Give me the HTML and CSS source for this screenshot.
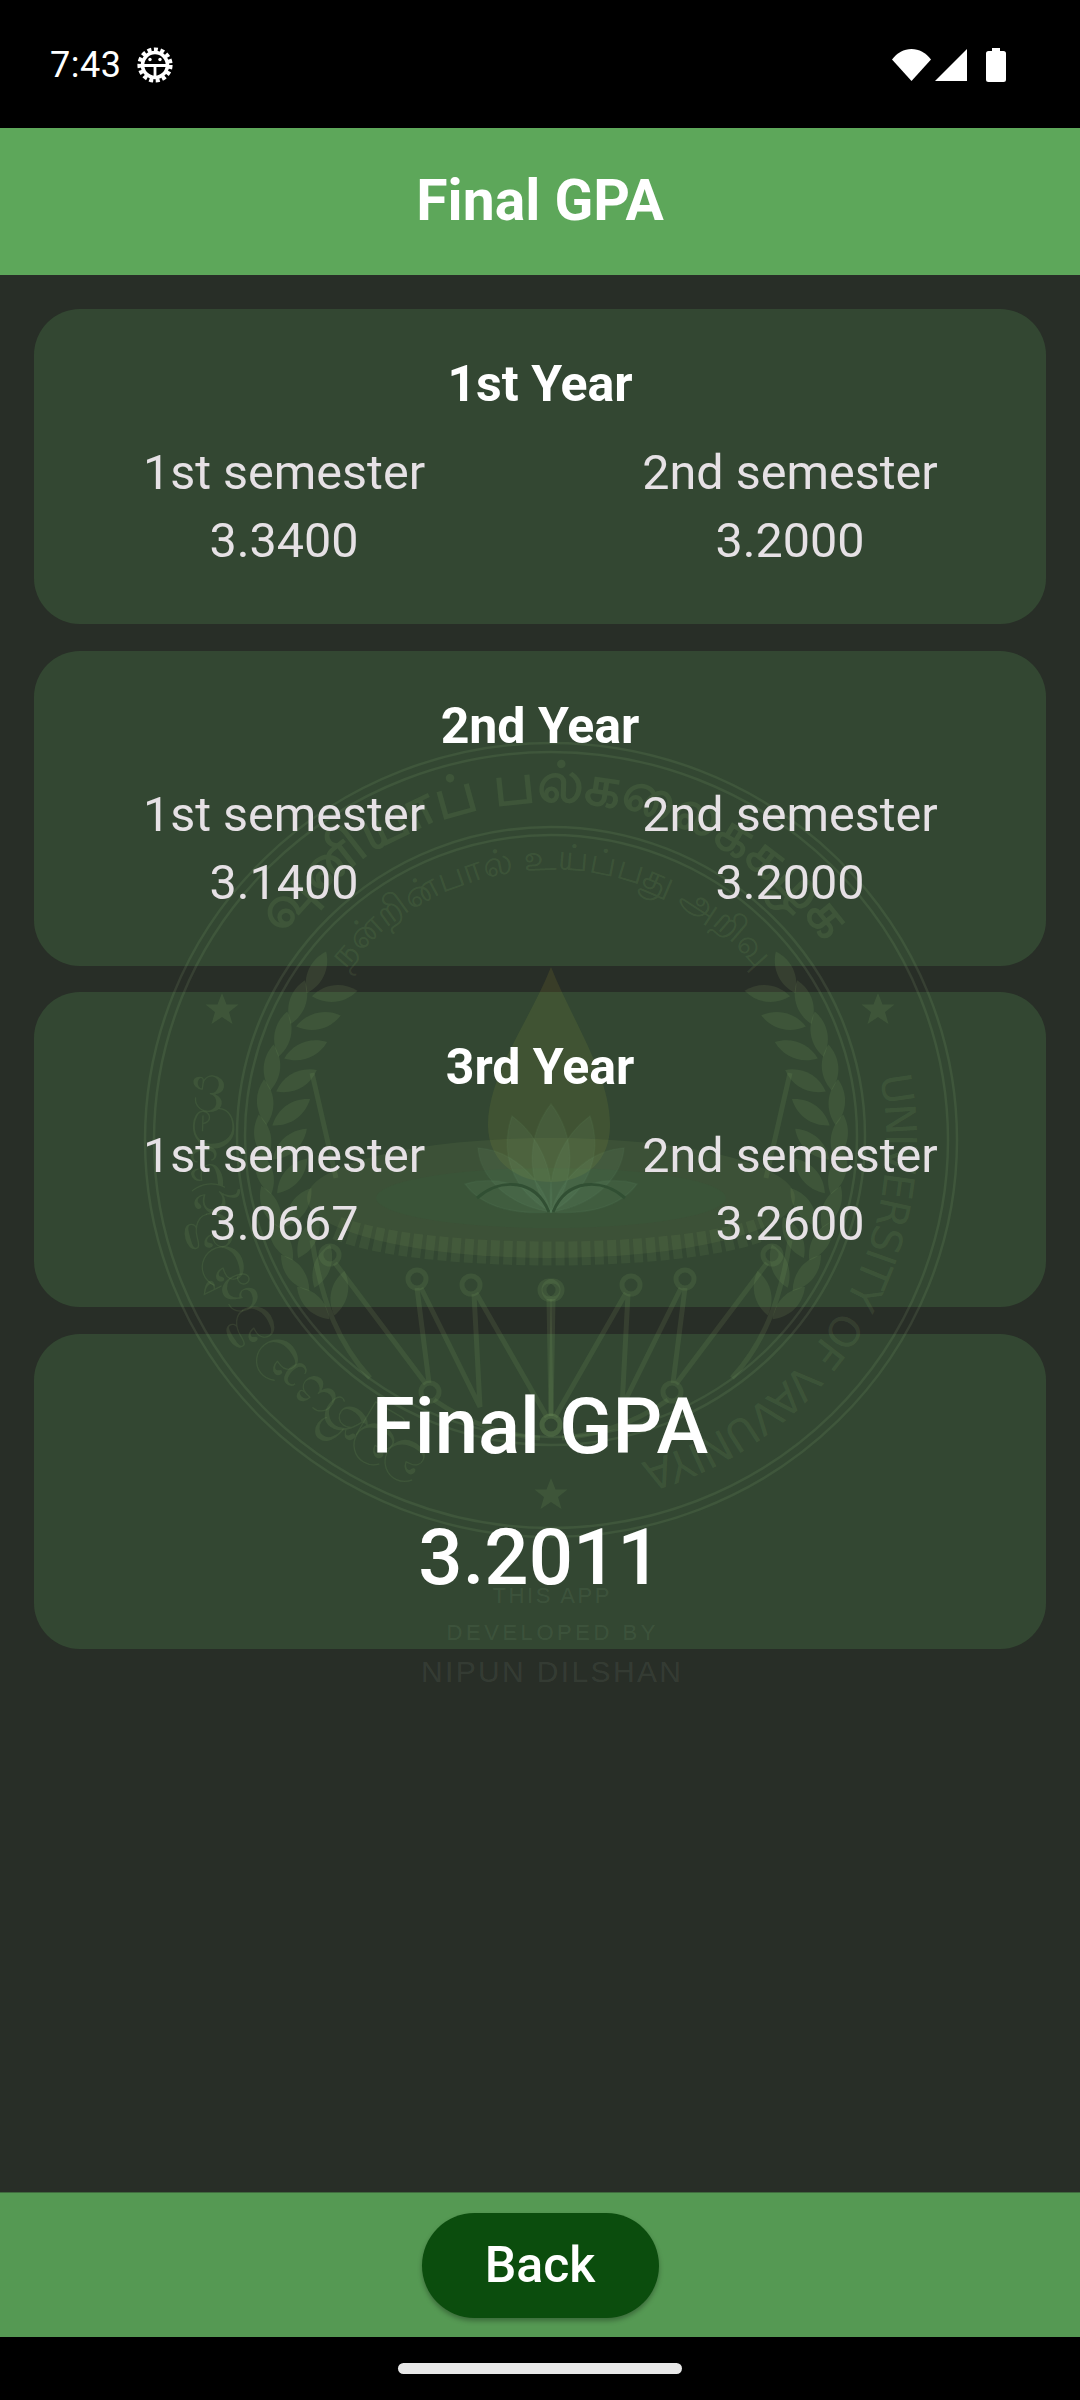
FILE: index.html
```html
<!DOCTYPE html>
<html lang="en">
<head>
    <meta charset="UTF-8">
    <meta name="viewport" content="width=device-width, initial-scale=1.0">
    <title>Final GPA</title>
    <link rel="stylesheet" href="styles.css">
</head>
<body>
    <div class="screen">
        <!-- Status bar -->
        <div class="status-bar">
            <span class="time">7:43</span>
            <svg class="gear" viewBox="0 0 36 36" width="36" height="36">
                <circle cx="18" cy="18" r="15.6" fill="none" stroke="#fff" stroke-width="4" stroke-dasharray="4 2.54"/>
                <circle cx="18" cy="18" r="12.5" fill="none" stroke="#fff" stroke-width="3.6"/>
                <circle cx="13" cy="12.5" r="1.7" fill="#fff"/>
                <circle cx="23" cy="12.5" r="1.7" fill="#fff"/>
                <path d="M6 18.5H30M18 18.5V31" stroke="#fff" stroke-width="2.8" fill="none"/>
            </svg>
            <div class="status-icons">
                <svg viewBox="0 0 39 32" width="39" height="32"><path d="M0 10.5C5 4 12 0 19.500 0S34 4 39 10.500L19.500 32Z" fill="#fff"/></svg>
                <svg viewBox="0 0 32 32" width="32" height="32"><path d="M32 0V32H0Z" fill="#fff"/></svg>
                <svg class="battery" viewBox="0 0 20 34" width="20" height="34"><path d="M6 0H14V3H17.500A2.500 2.500 0 0 1 20 5.500V31.500A2.500 2.500 0 0 1 17.500 34H2.500A2.500 2.500 0 0 1 0 31.500V5.500A2.500 2.500 0 0 1 2.500 3H6Z" fill="#fff"/></svg>
            </div>
        </div>

        <header class="app-bar">
            <h1>Final GPA</h1>
        </header>

        <main class="results">
            <!-- University crest behind the cards -->
            <svg class="crest" viewBox="0 275 1080 1917" preserveAspectRatio="xMidYMin meet">
                <defs>
                    <path id="star" d="M0 -17L4.500 -5.500H16.500L7 2L10.500 14L0 7L-10.500 14L-7 2L-16.500 -5.500H-4.500Z"/>
                    <path id="leaf" d="M0 0C-11 -14 -11 -32 0 -46C11 -32 11 -14 0 0Z"/>
                    <g id="leaf-pair">
                        <use href="#leaf" transform="translate(266 1140) rotate(-6)"/>
                        <use href="#leaf" transform="translate(272 1140) rotate(52)"/>
                    </g>
                    <path id="tamil-outer" d="M272.500 948.400A338 338 0 0 1 829.500 948.400"/>
                    <path id="tamil-inner" d="M345 970A262 262 0 0 1 757 970"/>
                    <path id="latin-arc" d="M880 1076A335 335 0 0 1 650 1460"/>
                    <path id="sinhala-arc" d="M431 1449A332 332 0 0 1 226 1077"/>
                </defs>
                <g class="crest-lines">
                    <ellipse cx="551" cy="1140" rx="406" ry="397"/>
                    <ellipse cx="551" cy="1140" rx="397" ry="388"/>
                    <ellipse cx="551" cy="1136" rx="314" ry="309"/>
                    <ellipse cx="551" cy="1136" rx="306" ry="301"/>
                </g>
                <g class="crest-fill">
                    <use href="#star" x="222" y="1010"/>
                    <use href="#star" x="878" y="1010"/>
                    <use href="#star" x="551" y="1495"/>
                    <!-- Laurel branches -->
                    <g id="laurel">
                        <use href="#leaf-pair" transform="rotate(-39 551 1140)"/>
                        <use href="#leaf-pair" transform="rotate(-32 551 1140)"/>
                        <use href="#leaf-pair" transform="rotate(-25 551 1140)"/>
                        <use href="#leaf-pair" transform="rotate(-18 551 1140)"/>
                        <use href="#leaf-pair" transform="rotate(-11 551 1140)"/>
                        <use href="#leaf-pair" transform="rotate(-4 551 1140)"/>
                        <use href="#leaf-pair" transform="rotate(3 551 1140)"/>
                        <use href="#leaf-pair" transform="rotate(10 551 1140)"/>
                        <use href="#leaf-pair" transform="rotate(17 551 1140)"/>
                        <use href="#leaf-pair" transform="rotate(24 551 1140)"/>
                        <use href="#leaf-pair" transform="rotate(31 551 1140)"/>
                    </g>
                    <use href="#laurel" transform="translate(1102 0) scale(-1 1)"/>
                    <text class="crest-latin"><textPath href="#latin-arc" textLength="500">UNIVERSITY OF VAVUNIYA</textPath></text>
                    <text class="crest-sinhala"><textPath href="#sinhala-arc" textLength="463">වවුනියාව විශ්වවිද්‍යාලය</textPath></text>
                    <text class="crest-tamil big"><textPath href="#tamil-outer" startOffset="50%">வவுனியாப் பல்கலைக்கழகம்</textPath></text>
                    <text class="crest-tamil small"><textPath href="#tamil-inner" startOffset="50%">நன்றின்பால் உய்ப்பது அறிவு</textPath></text>
                </g>
                <!-- Lamp with flame and lotus -->
                <ellipse class="lamp" cx="551" cy="1198" rx="244" ry="60"/>
                <ellipse class="lamp-well" cx="551" cy="1198" rx="175" ry="30"/>
                <path class="flame" d="M551 967C530 1020 488 1075 488 1125C488 1160 515 1182 551 1182C587 1182 610 1160 610 1125C610 1075 572 1020 551 967Z"/>
                <g class="lotus">
                    <path d="M551 1212C525 1180 527 1135 551 1104C575 1135 577 1180 551 1212Z"/>
                    <path d="M551 1212C510 1190 500 1150 512 1116C538 1135 556 1170 551 1212Z"/>
                    <path d="M551 1212C592 1190 602 1150 590 1116C564 1135 546 1170 551 1212Z"/>
                    <path d="M551 1212C505 1205 480 1175 478 1148C510 1150 540 1175 551 1212Z"/>
                    <path d="M551 1212C597 1205 622 1175 624 1148C592 1150 562 1175 551 1212Z"/>
                    <path d="M551 1212C510 1215 480 1205 465 1184C495 1175 535 1185 551 1212Z"/>
                    <path d="M551 1212C592 1215 622 1205 637 1184C607 1175 567 1185 551 1212Z"/>
                </g>
                <path class="lamp-edge" d="M477 1198C500 1178 535 1178 549 1212M625 1198C602 1178 567 1178 553 1212"/>
                <path class="lamp-band" d="M337 1228C420 1262 682 1262 765 1228"/>
                <!-- Rays under the lamp -->
                <g id="rays" class="crest-rays">
                    <circle cx="330" cy="1255" r="9"/>
                    <circle cx="417" cy="1279" r="9"/>
                    <circle cx="471" cy="1285" r="9"/>
                    <circle cx="549" cy="1290" r="9"/>
                    <circle cx="430" cy="1392" r="9"/>
                    <circle cx="551" cy="1425" r="9"/>
                    <path d="M335 1263L426 1384M417 1288L429 1383M421 1288L480 1407L474 1294M476 1293L547 1417M549 1299L551 1416"/>
                    <path d="M312 1073L336 1178M312 1240C322 1305 340 1345 370 1378M434 1400C470 1425 510 1436 540 1438"/>
                </g>
                <use href="#rays" transform="translate(1102 0) scale(-1 1)"/>
                <!-- Credit under the seal -->
                <g class="crest-credit">
                    <text x="551" y="1603" textLength="117">THIS APP</text>
                    <text x="551" y="1640" textLength="209">DEVELOPED BY</text>
                    <text class="credit-name" x="551" y="1682" textLength="260">NIPUN DILSHAN</text>
                </g>
            </svg>

            <section class="card">
                <h2>1st Year</h2>
                <div class="semesters">
                    <div class="semester"><span>1st semester</span><span>3.3400</span></div>
                    <div class="semester"><span>2nd semester</span><span>3.2000</span></div>
                </div>
            </section>
            <section class="card">
                <h2>2nd Year</h2>
                <div class="semesters">
                    <div class="semester"><span>1st semester</span><span>3.1400</span></div>
                    <div class="semester"><span>2nd semester</span><span>3.2000</span></div>
                </div>
            </section>
            <section class="card">
                <h2>3rd Year</h2>
                <div class="semesters">
                    <div class="semester"><span>1st semester</span><span>3.0667</span></div>
                    <div class="semester"><span>2nd semester</span><span>3.2600</span></div>
                </div>
            </section>
            <section class="card final">
                <p>Final GPA</p>
                <p>3.2011</p>
            </section>
        </main>

        <footer class="bottom-bar">
            <button>Back</button>
        </footer>

        <div class="nav-bar"><span class="nav-handle"></span></div>
    </div>
</body>
</html>
```

FILE: styles.css
```css
* {
    margin: 0;
    padding: 0;
    box-sizing: border-box;
}

body {
    font-family: Roboto, Arial, sans-serif;
    background-color: #000;
}

.screen {
    width: 1080px;
    height: 2400px;
    display: flex;
    flex-direction: column;
    overflow: hidden;
}

/* Status bar */
.status-bar {
    height: 128px;
    flex-shrink: 0;
    display: flex;
    align-items: center;
    padding: 2px 74px 0 50px;
    color: #fff;
    background-color: #000;
}

.time {
    font-size: 36px;
    letter-spacing: 0.5px;
}

.gear {
    margin-left: 16px;
}

.status-icons {
    margin-left: auto;
    display: flex;
    align-items: center;
    gap: 4px;
}

.battery {
    margin-left: 15px;
}

/* App bar */
.app-bar {
    height: 147px;
    flex-shrink: 0;
    display: flex;
    align-items: center;
    justify-content: center;
    padding-bottom: 3px;
    background-color: #5da75a;
}

.app-bar h1 {
    font-size: 57px;
    font-weight: 700;
    color: #fff;
}

/* Results */
.results {
    position: relative;
    flex: 1;
    display: flex;
    flex-direction: column;
    gap: 26.5px;
    padding: 34px 34px 0;
    background-color: #282e27;
}

.crest {
    position: absolute;
    left: 0;
    top: 0;
    width: 1080px;
    height: 1917px;
}

.crest-lines ellipse {
    fill: none;
    stroke: #8fa878;
    stroke-opacity: 0.15;
    stroke-width: 2.5;
}

.crest-fill {
    fill: #8fa868;
    fill-opacity: 0.14;
}

.crest-latin {
    font-family: "DejaVu Sans", sans-serif;
    font-size: 42px;
}

.crest-sinhala {
    font-family: "Noto Sans", sans-serif;
    font-size: 58px;
}

.crest-tamil {
    font-family: "Noto Sans", sans-serif;
    text-anchor: middle;
}

.crest-tamil.big {
    font-size: 56px;
    font-weight: 700;
}

.crest-tamil.small {
    font-size: 36px;
}

.lamp {
    fill: #9aa860;
    fill-opacity: 0.11;
}

.lamp-well {
    fill: #2e4232;
    fill-opacity: 0.5;
}

.flame {
    fill: #a09a30;
    fill-opacity: 0.14;
}

.lotus path {
    fill: #8fb8a0;
    fill-opacity: 0.09;
    stroke: #8fb8a0;
    stroke-opacity: 0.06;
    stroke-width: 1.500;
}

.lamp-edge {
    fill: none;
    stroke: #263829;
    stroke-width: 3;
}

.lamp-band {
    fill: none;
    stroke: #8fa868;
    stroke-opacity: 0.1;
    stroke-width: 24;
    stroke-dasharray: 9 4;
}

.crest-rays {
    fill: none;
    stroke: #8fa868;
    stroke-opacity: 0.14;
    stroke-width: 5;
}

.crest-credit text {
    font-family: "Liberation Sans", sans-serif;
    font-size: 22px;
    text-anchor: middle;
    fill: #8f9c88;
    fill-opacity: 0.15;
}

.crest-credit .credit-name {
    font-size: 30px;
}

.card {
    position: relative;
    height: 315px;
    flex-shrink: 0;
    padding-top: 46px;
    border-radius: 46px;
    text-align: center;
    background-color: rgba(95, 176, 95, 0.2);
}

.card h2 {
    font-size: 50px;
    font-weight: 700;
    line-height: 58px;
    color: #fff;
}

.semesters {
    display: grid;
    grid-template-columns: 1fr 1fr;
    margin: 36px 0 0 -3px;
    width: 1012px;
}

.semester {
    display: flex;
    flex-direction: column;
    gap: 20px;
    font-size: 48.5px;
    line-height: 48px;
    color: #e6e1e5;
}

.final {
    padding-top: 51px;
}

.final p {
    font-size: 78px;
    line-height: 84px;
    font-weight: 500;
    color: #fff;
}

.final p + p {
    margin-top: 47px;
}

/* Bottom bar */
.bottom-bar {
    height: 145px;
    flex-shrink: 0;
    display: flex;
    align-items: center;
    justify-content: center;
    background-color: #559953;
    border-top: 1px solid #3f6b3e;
}

.bottom-bar button {
    width: 237px;
    height: 105px;
    border: none;
    border-radius: 53px;
    font-family: Roboto, Arial, sans-serif;
    font-size: 50px;
    font-weight: 500;
    color: #fff;
    background-color: #0b4d0d;
    box-shadow: 0 3px 5px rgba(0, 0, 0, 0.3);
}

/* Navigation bar */
.nav-bar {
    height: 63px;
    flex-shrink: 0;
    display: flex;
    justify-content: center;
    padding-top: 26px;
    background-color: #000;
}

.nav-handle {
    width: 284px;
    height: 11px;
    border-radius: 6px;
    background-color: #e8e8e8;
}
```
